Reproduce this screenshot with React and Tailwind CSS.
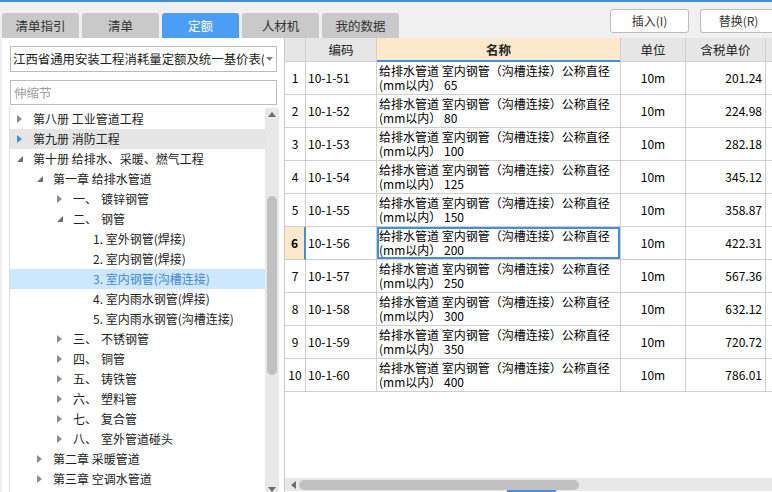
import React from "react";

const tabs = ["清单指引", "清单", "定额", "人材机", "我的数据"];

const tree = [
  { lvl: 0, arrow: "right", text: "第八册 工业管道工程" },
  { lvl: 0, arrow: "right", text: "第九册 消防工程", hover: true },
  { lvl: 0, arrow: "down", text: "第十册 给排水、采暖、燃气工程" },
  { lvl: 1, arrow: "down", text: "第一章 给排水管道" },
  { lvl: 2, arrow: "right", num: "一、", text: "镀锌钢管" },
  { lvl: 2, arrow: "down", num: "二、", text: "钢管" },
  { lvl: 3, text: "1. 室外钢管(焊接)" },
  { lvl: 3, text: "2. 室内钢管(焊接)" },
  { lvl: 3, text: "3. 室内钢管(沟槽连接)", selected: true },
  { lvl: 3, text: "4. 室内雨水钢管(焊接)" },
  { lvl: 3, text: "5. 室内雨水钢管(沟槽连接)" },
  { lvl: 2, arrow: "right", num: "三、", text: "不锈钢管" },
  { lvl: 2, arrow: "right", num: "四、", text: "铜管" },
  { lvl: 2, arrow: "right", num: "五、", text: "铸铁管" },
  { lvl: 2, arrow: "right", num: "六、", text: "塑料管" },
  { lvl: 2, arrow: "right", num: "七、", text: "复合管" },
  { lvl: 2, arrow: "right", num: "八、", text: "室外管道碰头" },
  { lvl: 1, arrow: "right", text: "第二章 采暖管道" },
  { lvl: 1, arrow: "right", text: "第三章 空调水管道" },
];

const rows = [
  ["10-1-51", "65", "201.24"],
  ["10-1-52", "80", "224.98"],
  ["10-1-53", "100", "282.18"],
  ["10-1-54", "125", "345.12"],
  ["10-1-55", "150", "358.87"],
  ["10-1-56", "200", "422.31"],
  ["10-1-57", "250", "567.36"],
  ["10-1-58", "300", "632.12"],
  ["10-1-59", "350", "720.72"],
  ["10-1-60", "400", "786.01"],
];

function Arrow({ type, blue }) {
  if (type === "right") {
    return (
      <svg width="5" height="8" viewBox="0 0 5 8" className="block">
        <path d="M0 0 L5 4 L0 8 Z" fill={blue ? "#3f8fe6" : "#8c8c8c"} />
      </svg>
    );
  }
  return (
    <svg width="6" height="6" viewBox="0 0 6 6" className="block">
      <path d="M6 0 L6 6 L0 6 Z" fill="#6e6e6e" />
    </svg>
  );
}

function TreeRow({ r }) {
  const textLeft = 23 + 20 * r.lvl;
  const arrowLeft = 7 + 20 * r.lvl;
  return (
    <div
      className={
        "relative h-[20px] flex items-center whitespace-nowrap " +
        (r.selected ? "bg-[#cce8ff] text-[#3f87d6]" : r.hover ? "bg-[#e5e5e5] text-[#222]" : "text-[#222]")
      }
    >
      {r.arrow && (
        <span className="absolute top-1/2 -translate-y-1/2" style={{ left: arrowLeft }}>
          <Arrow type={r.arrow} blue={r.hover} />
        </span>
      )}
      <span className="flex items-center" style={{ paddingLeft: textLeft }}>
        {r.num && <span className="inline-block w-[28px]">{r.num}</span>}
        <span>{r.text}</span>
      </span>
    </div>
  );
}

export default function App() {
  return (
    <div className="w-[772px] h-[492px] overflow-hidden bg-[#f0f0f0] border-t-2 border-[#3f8de0] flex flex-col font-['Noto_Sans_CJK_SC',sans-serif] text-[12px] leading-[16px]">
      {/* top band */}
      <div className="h-[36px] flex shrink-0">
        <div className="flex items-end gap-[3px] pl-[2px] pt-[11px]">
          {tabs.map((t) => (
            <div
              key={t}
              className={
                "w-[77px] h-[25px] rounded-t-[3px] flex items-center justify-center text-[12.5px] " +
                (t === "定额" ? "bg-[#4a9ef5] text-white" : "bg-[#c9c9c9] text-[#333]")
              }
            >
              {t}
            </div>
          ))}
        </div>
        <div className="flex-1" />
        <div className="flex gap-[11px] pt-[7px] pr-0">
          <div className="w-[79px] h-[24px] bg-white border border-[#bdbdbd] rounded-[3px] flex items-center justify-center text-[#333]">
            插入(I)
          </div>
          <div className="w-[72px] h-[24px] bg-white border border-[#bdbdbd] border-r-0 rounded-l-[3px] flex items-center justify-center pl-[4px] text-[#333]">
            替换(R)
          </div>
        </div>
      </div>

      {/* body */}
      <div className="flex-1 flex min-h-0">
        {/* left panel */}
        <div className="w-[282px] ml-[2px] bg-white flex flex-col min-h-0">
          <div className="ml-[8px] mt-[8px] w-[267px] h-[26px] border border-[#bcbcbc] flex items-center pl-[2px] pr-[3px] overflow-hidden">
            <span className="flex-1 overflow-hidden whitespace-nowrap text-[12.4px] text-[#222]">
              江西省通用安装工程消耗量定额及统一基价表(2017)
            </span>
            <svg width="7" height="4" viewBox="0 0 7 4" className="ml-[2px] shrink-0">
              <path d="M0 0 L7 0 L3.5 4 Z" fill="#808080" />
            </svg>
          </div>
          <div className="ml-[8px] mt-[8px] w-[267px] h-[25px] border border-[#bcbcbc] flex items-center pl-[3px] text-[#a0a0a0] text-[12.5px]">
            伸缩节
          </div>
          <div className="ml-[7px] mt-[2px] w-[270px] flex-1 min-h-0 flex border-l border-[#dcdcdc]">
            <div className="flex-1 pt-[2px] overflow-hidden">
              {tree.map((r, i) => (
                <TreeRow key={i} r={r} />
              ))}
            </div>
            <div className="w-[14px] mt-[1px] bg-[#e8e8e8] flex flex-col items-center">
              <svg width="8" height="5" viewBox="0 0 8 5" className="mt-[4px]">
                <path d="M0 5 L4 0 L8 5 Z" fill="#6e6e6e" />
              </svg>
              <div className="mt-[79px] w-[10px] h-[179px] rounded-full bg-[#c1c1c1]" />
              <div className="flex-1" />
              <svg width="8" height="5" viewBox="0 0 8 5">
                <path d="M0 0 L8 0 L4 5 Z" fill="#6e6e6e" />
              </svg>
            </div>
          </div>
        </div>

        {/* right panel */}
        <div className="flex-1 bg-white border-l border-[#c8c8c8] flex flex-col min-w-0 relative">
          {/* header */}
          <div className="flex h-[24px] shrink-0 text-[12.5px] text-[#222]">
            <div className="w-[21px] shrink-0 bg-[#e6e6e6] border-r border-b border-[#cfcfcf]" />
            <div className="w-[71px] shrink-0 bg-[#e6e6e6] border-r border-b border-[#cfcfcf] flex items-center justify-center">
              编码
            </div>
            <div className="w-[244px] shrink-0 bg-[#fde8c9] border-r border-[#cfcfcf] shadow-[inset_0_-2px_0_#3f8fe6] flex items-center justify-center font-bold">
              名称
            </div>
            <div className="w-[65px] shrink-0 bg-[#e6e6e6] border-r border-b border-[#cfcfcf] flex items-center justify-center">
              单位
            </div>
            <div className="w-[80px] shrink-0 bg-[#e6e6e6] border-r border-b border-[#cfcfcf] flex items-center justify-center">
              含税单价
            </div>
            <div className="w-[60px] shrink-0 bg-[#e6e6e6] border-b border-[#cfcfcf]" />
          </div>
          {/* rows */}
          {rows.map(([code, dia, price], i) => {
            const sel = i === 5;
            return (
              <div key={code} className="flex h-[33px] shrink-0 text-[12px] text-black">
                <div
                  className={
                    "w-[21px] shrink-0 border-b border-[#cfcfcf] flex items-center justify-center " +
                    (sel ? "bg-[#fde8c9] font-bold border-r-2 border-r-[#3f8fe6]" : "border-r")
                  }
                >
                  {i + 1}
                </div>
                <div className="w-[71px] shrink-0 border-r border-b border-[#cfcfcf] flex items-center pl-[2px]">
                  {code}
                </div>
                <div
                  className={
                    "w-[244px] shrink-0 border-r border-b border-[#cfcfcf] flex flex-col justify-center pl-[2px] leading-[14px] whitespace-nowrap overflow-hidden " +
                    (sel ? "shadow-[inset_0_0_0_2px_#3f8fe6]" : "")
                  }
                >
                  <span>给排水管道 室内钢管（沟槽连接）公称直径</span>
                  <span>(mm以内） {dia}</span>
                </div>
                <div className="w-[65px] shrink-0 border-r border-b border-[#cfcfcf] flex items-center justify-center">
                  10m
                </div>
                <div className="w-[80px] shrink-0 border-r border-b border-[#cfcfcf] flex items-center justify-end pr-[3px]">
                  {price}
                </div>
                <div className="w-[60px] shrink-0 border-b border-[#cfcfcf]" />
              </div>
            );
          })}
          <div className="flex-1" />
          {/* horizontal scrollbar */}
          <div className="h-[13px] mb-[1px] bg-[#e8e8e8] flex items-center shrink-0">
            <svg width="5" height="8" viewBox="0 0 5 8" className="ml-[6px]">
              <path d="M5 0 L5 8 L0 4 Z" fill="#6e6e6e" />
            </svg>
            <div className="ml-[3px] w-[280px] h-[10px] rounded-full bg-[#c1c1c1]" />
          </div>
          <div className="absolute bottom-0 left-[222px] w-[49px] h-[2px] bg-[#3f8fe6]" />
        </div>
      </div>
    </div>
  );
}
